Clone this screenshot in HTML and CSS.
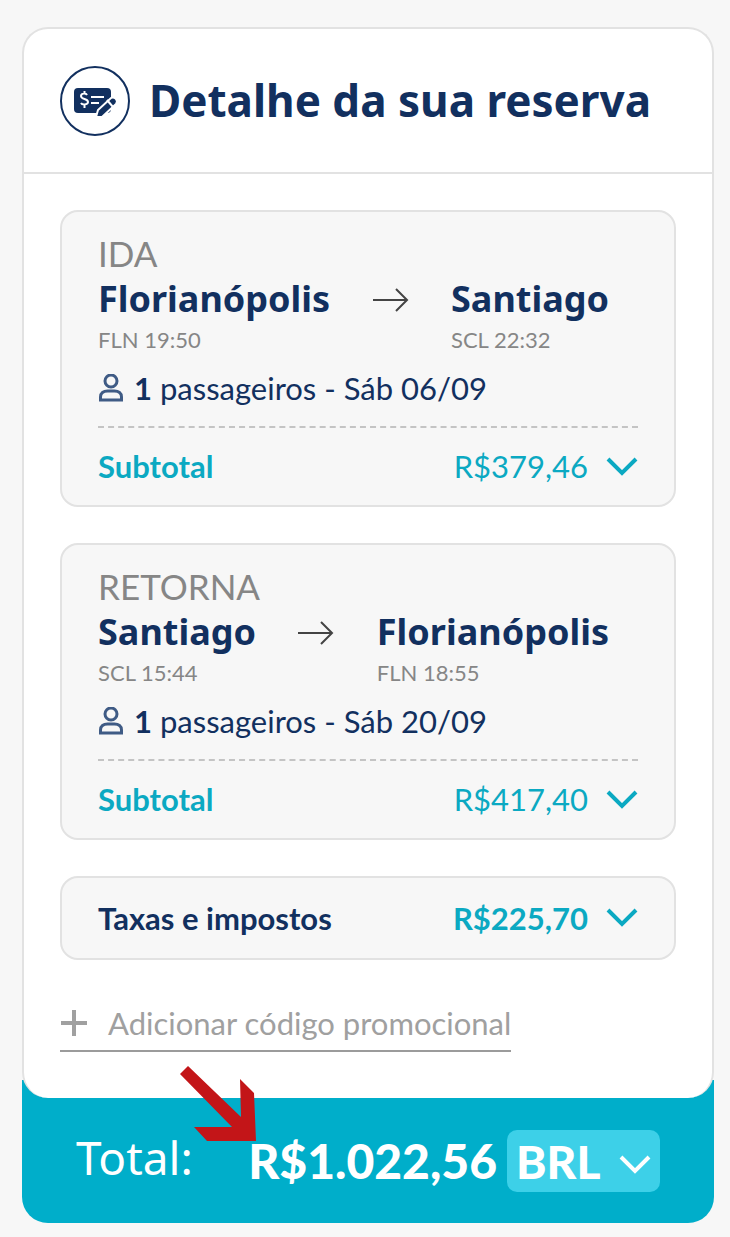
FILE: index.html
```html
<!DOCTYPE html>
<html lang="pt-BR">
<head>
    <meta charset="UTF-8">
    <meta name="viewport" content="width=device-width, initial-scale=1.0">
    <title>Detalhe da sua reserva</title>
    <link rel="stylesheet" href="styles.css">
</head>
<body>
    <main class="booking">
        <section class="panel">
            <header class="panel-header">
                <svg class="header-icon" viewBox="0 0 70 70" aria-hidden="true">
                    <circle cx="35" cy="35" r="34" fill="#fff" stroke="#12305f" stroke-width="2"/>
                    <rect x="14" y="22" width="37" height="25" rx="4" fill="#12305f"/>
                    <path d="M27 29c-1-2-6-2-6 1 0 4 7 2 7 6 0 3-6 3-7 1M24.500 25v3M24.500 38v4" fill="none" stroke="#fff" stroke-width="2"/>
                    <path d="M31 31h13M31 37h8" stroke="#fff" stroke-width="2"/>
                    <path d="M36 51l2-7 13-12c3-2 8 2 5 6L42 51z" fill="#12305f" stroke="#fff" stroke-width="2"/>
                    <path d="M47 34l6 7" stroke="#fff" stroke-width="2"/>
                </svg>
                <h1>Detalhe da sua reserva</h1>
            </header>

            <div class="panel-body">
                <article class="card">
                    <p class="direction">IDA</p>
                    <div class="route">
                        <div>
                            <h2>Florianópolis</h2>
                            <p class="schedule">FLN 19:50</p>
                        </div>
                        <svg class="arrow" viewBox="0 0 36 24" aria-hidden="true"><path d="M0 12h34M23 1l11 11-11 11"/></svg>
                        <div>
                            <h2>Santiago</h2>
                            <p class="schedule">SCL 22:32</p>
                        </div>
                    </div>
                    <p class="passengers">
                        <svg class="person" viewBox="0 0 24 28" aria-hidden="true"><circle cx="12" cy="7" r="6"/><path d="M1.500 26v-3c0-4 3-6 7-6h7c4 0 7 2 7 6v3z"/></svg>
                        <span><b>1</b> passageiros - Sáb 06/09</span>
                    </p>
                    <div class="amount-row subtotal">
                        <span class="label">Subtotal</span>
                        <span class="price">R$379,46</span>
                        <button class="toggle" type="button" aria-label="Ver subtotal da ida">
                            <svg class="chevron" viewBox="0 0 32 20" aria-hidden="true"><path d="M2 2l14 14L30 2"/></svg>
                        </button>
                    </div>
                </article>

                <article class="card">
                    <p class="direction">RETORNA</p>
                    <div class="route">
                        <div>
                            <h2>Santiago</h2>
                            <p class="schedule">SCL 15:44</p>
                        </div>
                        <svg class="arrow" viewBox="0 0 36 24" aria-hidden="true"><path d="M0 12h34M23 1l11 11-11 11"/></svg>
                        <div>
                            <h2>Florianópolis</h2>
                            <p class="schedule">FLN 18:55</p>
                        </div>
                    </div>
                    <p class="passengers">
                        <svg class="person" viewBox="0 0 24 28" aria-hidden="true"><circle cx="12" cy="7" r="6"/><path d="M1.500 26v-3c0-4 3-6 7-6h7c4 0 7 2 7 6v3z"/></svg>
                        <span><b>1</b> passageiros - Sáb 20/09</span>
                    </p>
                    <div class="amount-row subtotal">
                        <span class="label">Subtotal</span>
                        <span class="price">R$417,40</span>
                        <button class="toggle" type="button" aria-label="Ver subtotal do retorno">
                            <svg class="chevron" viewBox="0 0 32 20" aria-hidden="true"><path d="M2 2l14 14L30 2"/></svg>
                        </button>
                    </div>
                </article>

                <article class="card">
                    <div class="amount-row taxes">
                        <span class="label">Taxas e impostos</span>
                        <span class="price">R$225,70</span>
                        <button class="toggle" type="button" aria-label="Ver taxas e impostos">
                            <svg class="chevron" viewBox="0 0 32 20" aria-hidden="true"><path d="M2 2l14 14L30 2"/></svg>
                        </button>
                    </div>
                </article>

                <button class="promo" type="button">
                    <svg class="plus" viewBox="0 0 28 28" aria-hidden="true"><path d="M14 1v26M1 14h26"/></svg>
                    Adicionar código promocional
                </button>
            </div>
        </section>

        <footer class="total">
            <span class="total-label">Total:</span>
            <strong class="total-price">R$1.022,56</strong>
            <div class="currency">
                <select aria-label="Moeda">
                    <option>BRL</option>
                </select>
                <svg class="chevron" viewBox="0 0 32 20" aria-hidden="true"><path d="M2 2l14 14L30 2"/></svg>
            </div>
            <!-- seta apontando para o total -->
            <svg class="pointer" viewBox="0 0 76 75" aria-hidden="true"><path d="M0 8l8-8 53 51-1-38 14 14 2 48H27L14 61h38z"/></svg>
        </footer>
    </main>
</body>
</html>
```

FILE: styles.css
```css
* {
    box-sizing: border-box;
}
body {
    margin: 0;
    background: #f7f7f7;
    color: #12305f;
    font-family: Lato, "Liberation Sans", sans-serif;
    font-size: 31px;
}
h1, h2, p {
    margin: 0;
}
h1, h2, .total-label {
    font-family: "Noto Sans", "Open Sans", sans-serif;
}
button {
    padding: 0;
    border: none;
    background: none;
    color: inherit;
    font: inherit;
    cursor: pointer;
}
svg {
    display: block;
    flex: none;
}
.booking {
    padding: 27px 16px 14px 22px;
}
.panel {
    position: relative;
    z-index: 1;
    border: 2px solid #e2e2e2;
    border-bottom: none;
    border-radius: 26px;
    background: #fff;
}
.panel-header {
    display: flex;
    align-items: center;
    gap: 19px;
    padding: 36px;
    border-bottom: 2px solid #e2e2e2;
}
.header-icon {
    width: 70px;
    height: 70px;
}
h1 {
    font-size: 44px;
    line-height: 71px;
    white-space: nowrap;
}
.panel-body {
    display: flex;
    flex-direction: column;
    align-items: flex-start;
    gap: 36px;
    padding: 36px 36px 46px;
}
.card {
    align-self: stretch;
    padding: 0 36px;
    border: 2px solid #e2e2e2;
    border-radius: 18px;
    background: #f7f7f7;
}
.direction {
    padding-top: 18px;
    color: #868686;
    font-size: 35px;
    line-height: 46px;
}
.route {
    display: flex;
    justify-content: space-between;
    padding-right: 29px;
}
h2 {
    font-size: 36px;
    line-height: 46px;
}
.schedule {
    color: #868686;
    font-size: 22px;
    line-height: 36px;
}
.arrow {
    width: 36px;
    height: 24px;
    margin-top: 12px;
    fill: none;
    stroke: #444;
    stroke-width: 2;
}
.passengers {
    display: flex;
    align-items: center;
    gap: 10px;
    padding-bottom: 8px;
    line-height: 60px;
}
.person {
    width: 26px;
    height: 28px;
    fill: none;
    stroke: #3f5b85;
    stroke-width: 3;
}
.amount-row {
    display: flex;
    align-items: center;
    gap: 18px;
    color: #0ba9c2;
}
.label {
    flex: 1;
    font-weight: bold;
}
.subtotal {
    border-top: 2px dashed #c4c4c4;
    line-height: 77px;
}
.taxes {
    font-weight: bold;
    line-height: 80px;
}
.taxes .label {
    color: #12305f;
}
.chevron {
    width: 32px;
    height: 20px;
    fill: none;
    stroke: currentColor;
    stroke-width: 4;
}
.promo {
    display: flex;
    align-items: center;
    gap: 20px;
    margin-top: 4px;
    padding-bottom: 4px;
    border-bottom: 2px solid #9b9b9b;
    color: #a0a0a0;
    line-height: 46px;
}
.plus {
    width: 28px;
    height: 28px;
    fill: none;
    stroke: currentColor;
    stroke-width: 4;
}
.total {
    position: relative;
    display: flex;
    align-items: center;
    justify-content: space-between;
    margin-top: -18px;
    padding: 50px 54px 31px;
    border-radius: 0 0 26px 26px;
    background: #00aeca;
    color: #fff;
}
.total-label {
    font-size: 46px;
    line-height: 54px;
    padding-bottom: 8px;
}
.total-price {
    margin-left: auto;
    margin-right: 10px;
    font-size: 48px;
    font-weight: 900;
    line-height: 62px;
}
.currency {
    display: grid;
    align-items: center;
    border-radius: 10px;
    background: #3dd0e8;
}
.currency select, .currency .chevron {
    grid-area: 1 / 1;
}
.currency select {
    width: 153px;
    height: 62px;
    padding: 0 48px 0 9px;
    border: none;
    background: none;
    color: inherit;
    font: 900 46px Lato, sans-serif;
    appearance: none;
}
.currency .chevron {
    justify-self: end;
    margin: 8px 9px 0 0;
    pointer-events: none;
}
.pointer {
    position: absolute;
    z-index: 2;
    top: -14px;
    left: 158px;
    width: 76px;
    height: 75px;
    fill: #c31518;
}
```
